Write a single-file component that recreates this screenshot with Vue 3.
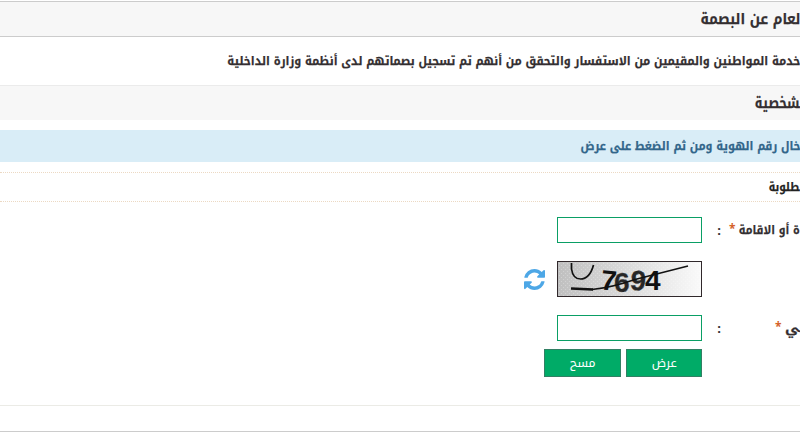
<script setup>
import { ref, onMounted } from 'vue'

const zwj = '\u200d'
const title = 'لعام عن البصمة'
const intro = 'خدمة المواطنين والمقيمين من الاستفسار والتحقق من أنهم تم تسجيل بصماتهم لدى أنظمة وزارة الداخلية'
const section = zwj + 'شخصية'
const hint = 'خال رقم الهوية ومن ثم الضغط على عرض'
const required = zwj + 'طلوبة'
const idNumber = ref('')
const code = ref('')

const root = ref(null)
onMounted(() => {
  root.value.querySelectorAll('[data-w]').forEach((el) => {
    const w = el.getBoundingClientRect().width
    if (w) el.style.transform = `scaleX(${Number(el.dataset.w) / w})`
  })
})
</script>

<template>
  <main ref="root" class="page" dir="rtl">
    <header class="title"><span class="fit" data-w="100">{{ title }}</span></header>
    <p class="intro"><span class="fit" data-w="573">{{ intro }}</span></p>
    <h2 class="section"><span class="fit" data-w="45">{{ section }}</span></h2>
    <div class="hint"><span class="fit" data-w="220">{{ hint }}</span></div>
    <h3 class="required"><span class="fit" data-w="31">{{ required }}</span></h3>
    <form class="form" @submit.prevent>
      <div class="row">
        <label class="label"><span class="fit" data-w="61">ة أو الاقامة</span><b class="star">*</b></label>
        <span class="colon">:</span>
        <input v-model="idNumber" class="field" type="text" />
      </div>
      <div class="row captcha-row">
        <svg class="captcha" viewBox="0 0 145 36">
          <defs>
            <linearGradient id="shade"><stop offset="0" stop-color="#bfbfbf" /><stop offset=".5" stop-color="#dcdcdc" /><stop offset="1" stop-color="#fafafa" /></linearGradient>
            <pattern id="grain" width="4" height="4" patternUnits="userSpaceOnUse"><path d="M0 0h1v1H0zM2 2h1v1H2z" fill="#fff" opacity=".25" /></pattern>
          </defs>
          <rect width="145" height="36" fill="url(#shade)" />
          <rect width="145" height="36" fill="url(#grain)" />
          <g class="digits">
            <text x="44" y="29" transform="rotate(6 51 20)">7</text>
            <text x="57" y="30.500" class="rough">6</text>
            <text x="73.500" y="29.500" class="rough" transform="rotate(6 82 20)">9</text>
            <text x="88" y="29">4</text>
          </g>
          <path d="M14.500 2v6c1 7 4 10 9 10s10-3 13-14" fill="none" stroke="#111" stroke-width="1.700" />
          <path d="M14 27.500l22 1" fill="none" stroke="#111" stroke-width="2.400" />
          <path d="M35 28.500q20-2 43-10L131 5" fill="none" stroke="#111" stroke-width="1.400" />
          <rect x=".5" y=".5" width="144" height="35" fill="none" stroke="#30282b" />
        </svg>
        <svg class="refresh" viewBox="0 0 1536 1536">
          <path fill="#4da7e6" d="M1511 928q0 5-1 7-64 268-268 434.500T764 1536q-146 0-282.500-55T238 1324l-129 129q-19 19-45 19t-45-19-19-45V960q0-26 19-45t45-19h448q26 0 45 19t19 45-19 45l-137 137q71 66 161 102t187 36q134 0 250-65t186-179q11-17 53-117 8-23 30-23h192q13 0 22.500 9.500t9.500 22.500zm25-800v448q0 26-19 45t-45 19h-448q-26 0-45-19t-19-45 19-45l138-138Q969 256 768 256q-134 0-250 65T332 500q-11 17-53 117-8 23-30 23H50q-13 0-22.500-9.500T18 608v-7q65-268 270-434.500T768 0q146 0 284 55.500T1297 212l130-129q19-19 45-19t45 19 19 45z" />
        </svg>
      </div>
      <div class="row code-row">
        <label class="label"><span class="fit" data-w="15">{{ zwj + 'ي' }}</span><b class="star">*</b></label>
        <span class="colon">:</span>
        <input v-model="code" class="field" type="text" />
      </div>
      <div class="actions">
        <button class="btn"><span class="fit mid" data-w="25">عرض</span></button>
        <button class="btn clear"><span class="fit mid" data-w="26">مسح</span></button>
      </div>
    </form>
    <footer class="footer"></footer>
  </main>
</template>

<style>
body { margin: 0; background: #fff; }
</style>
<style scoped>
.page { width: 800px; height: 432px; overflow: hidden; box-sizing: border-box; padding-top: 1px; font: bold 12px "Droid Arabic Kufi", "Noto Kufi Arabic", "DejaVu Sans", sans-serif; color: #332e30; }
.page * { box-sizing: border-box; }
.fit { display: inline-block; white-space: nowrap; transform-origin: right center; -webkit-text-stroke: .25px currentColor; }
.fit.mid { transform-origin: center; -webkit-text-stroke: 0; }
.title { height: 36px; border: solid #ccc; border-width: 1px 0; background: #f7f7f7; font-size: 15px; line-height: 34px; }
.intro { margin: 0; height: 48px; line-height: 48px; font-size: 12px; }
.section { margin: 0; height: 35px; border-top: 1px solid #ebebeb; background: #f7f7f7; font-size: 15px; line-height: 35px; }
.hint { height: 32px; margin-top: 10px; background: #d9edf7; color: #31658a; font-size: 12px; line-height: 32px; }
.required { height: 30px; margin: 10px 0 0; border: dotted #ecd9c3; border-width: 1px 0; font-size: 12px; line-height: 28px; color: #222; }
.form { padding-top: 15px; font-size: 12px; }
.row { display: flex; align-items: center; height: 26px; }
.label { width: 79px; display: flex; align-items: center; position: relative; }
.star { position: absolute; left: 8px; top: -1px; color: #d4622a; font-weight: bold; font-size: 12px; }
.code-row .star { left: 54px; }
.colon { width: 19px; font-size: 13px; }
.field { width: 145px; height: 26px; border: 1px solid #0a9f65; background: #fff; padding: 2px 4px; outline: none; }
.captcha-row { height: 36px; margin-top: 18px; padding-right: 98px; gap: 12px; }
.captcha { width: 145px; height: 36px; }
.refresh { width: 21px; height: 21px; }
.digits { font: bold 28px "Liberation Sans", sans-serif; fill: #111; direction: ltr; }
.rough { fill: #262626; stroke: #555; stroke-width: .6; stroke-dasharray: 3 2; }
.code-row { margin-top: 18px; }
.actions { display: flex; gap: 5px; padding-right: 98px; margin-top: 8px; }
.btn { width: 76px; height: 28px; border: 1px solid #328064; background: #00ab67; color: #fff; padding: 0; font: 12px "Droid Arabic Kufi", "Noto Kufi Arabic", "DejaVu Sans", sans-serif; }
.clear { width: 77px; }
.footer { height: 27px; margin-top: 28px; border: solid #ebebe6; border-width: 1px 0; border-bottom-color: #ccc; }
</style>
